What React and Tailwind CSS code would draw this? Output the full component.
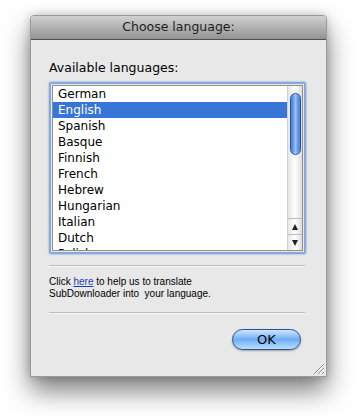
import React from "react";

const langs = ["German","English","Spanish","Basque","Finnish","French","Hebrew","Hungarian","Italian","Dutch","Polish"];

export default function App() {
  return (
    <div className="w-[359px] h-[416px] bg-white pt-[15px] pl-[30px] overflow-hidden" style={{ fontFamily: '"DejaVu Sans", "Noto Sans", sans-serif' }}>
      <div className="relative w-[297px] h-[362px] bg-[#e8e8e8] border border-[#9a9a9a] rounded-t-[4px] shadow-[0_14px_26px_rgba(0,0,0,0.5),0_0_10px_rgba(0,0,0,0.2)] flex flex-col">
        <div className="h-[24px] rounded-t-[4px] bg-gradient-to-b from-[#d2d2d2] to-[#939393] border-b border-[#4f4f4f] flex items-center justify-center text-[12.5px] text-[#1d1d1d]">
          Choose language:
        </div>
        <div className="flex flex-col px-[18px] pt-[20px]">
          <div className="text-[12.5px] text-black leading-[16px]">Available languages:</div>
          <div className="mt-[6px] w-[257px] h-[172px] rounded-[2px] border-[2px] border-[#86a9dc] p-[1px] shadow-[0_0_2px_#5c8ad0]">
            <div className="w-full h-full bg-white border border-[#8f8f8f] flex overflow-hidden">
              <div className="flex-1 flex flex-col overflow-hidden">
                {langs.map((l, i) => (
                  <div key={l} className={`h-[16px] shrink-0 leading-[16px] pl-[5px] text-[12px] ${i === 1 ? "bg-[#3875d7] text-white" : "text-black"}`}>{l}</div>
                ))}
              </div>
              <div className="w-[15px] h-full flex flex-col bg-gradient-to-r from-[#e6e6e6] via-[#ffffff] to-[#dcdcdc] border-l border-[#cfcfcf]">
                <div className="flex-1 relative pt-[7px] px-[1.5px]">
                  <div className="h-[62px] rounded-full border border-[#1e4fa8] bg-gradient-to-r from-[#2f6bd6] via-[#9dc2f5] to-[#2f6bd6] shadow-[inset_0_0_2px_rgba(255,255,255,0.6)]" />
                </div>
                <div className="h-[16px] border-t border-[#bdbdbd] flex items-center justify-center">
                  <div className="w-0 h-0 border-l-[3.5px] border-r-[3.5px] border-b-[6px] border-l-transparent border-r-transparent border-b-[#222]" />
                </div>
                <div className="h-[16px] border-t border-[#bdbdbd] flex items-center justify-center">
                  <div className="w-0 h-0 border-l-[3.5px] border-r-[3.5px] border-t-[6px] border-l-transparent border-r-transparent border-t-[#222]" />
                </div>
              </div>
            </div>
          </div>
          <div className="mt-[11px] w-[256px] h-[2px] border-t border-[#bcbcbc] border-b border-b-[#f8f8f8]" />
          <div className="mt-[9px] text-[10px] leading-[12px] text-black" style={{ fontFamily: '"Liberation Sans", Arial, sans-serif' }}>
            <div>Click <span className="text-[#1d3fae] underline">here</span> to help us to translate</div>
            <div>SubDownloader into &nbsp;your language.</div>
          </div>
          <div className="mt-[12px] w-[256px] h-[2px] border-t border-[#bcbcbc] border-b border-b-[#f8f8f8]" />
          <div className="flex justify-end pr-[7px] mt-[15px]">
            <div className="w-[69px] h-[21px] rounded-full border border-[#2f4f86] bg-gradient-to-b from-[#cfe5fd] via-[#6eaef5] to-[#b9e0ff] flex items-center justify-center text-[13px] text-black shadow-[0_1px_2px_rgba(0,0,0,0.3)]">
              OK
            </div>
          </div>
        </div>
        <svg className="absolute right-[2px] bottom-[2px]" width="11" height="11" viewBox="0 0 11 11">
          <line x1="1" y1="11" x2="11" y2="1" stroke="#8a8a8a" strokeWidth="1" />
          <line x1="2" y1="11" x2="11" y2="2" stroke="#fff" strokeWidth="1" />
          <line x1="5" y1="11" x2="11" y2="5" stroke="#8a8a8a" strokeWidth="1" />
          <line x1="6" y1="11" x2="11" y2="6" stroke="#fff" strokeWidth="1" />
          <line x1="9" y1="11" x2="11" y2="9" stroke="#8a8a8a" strokeWidth="1" />
        </svg>
      </div>
    </div>
  );
}
